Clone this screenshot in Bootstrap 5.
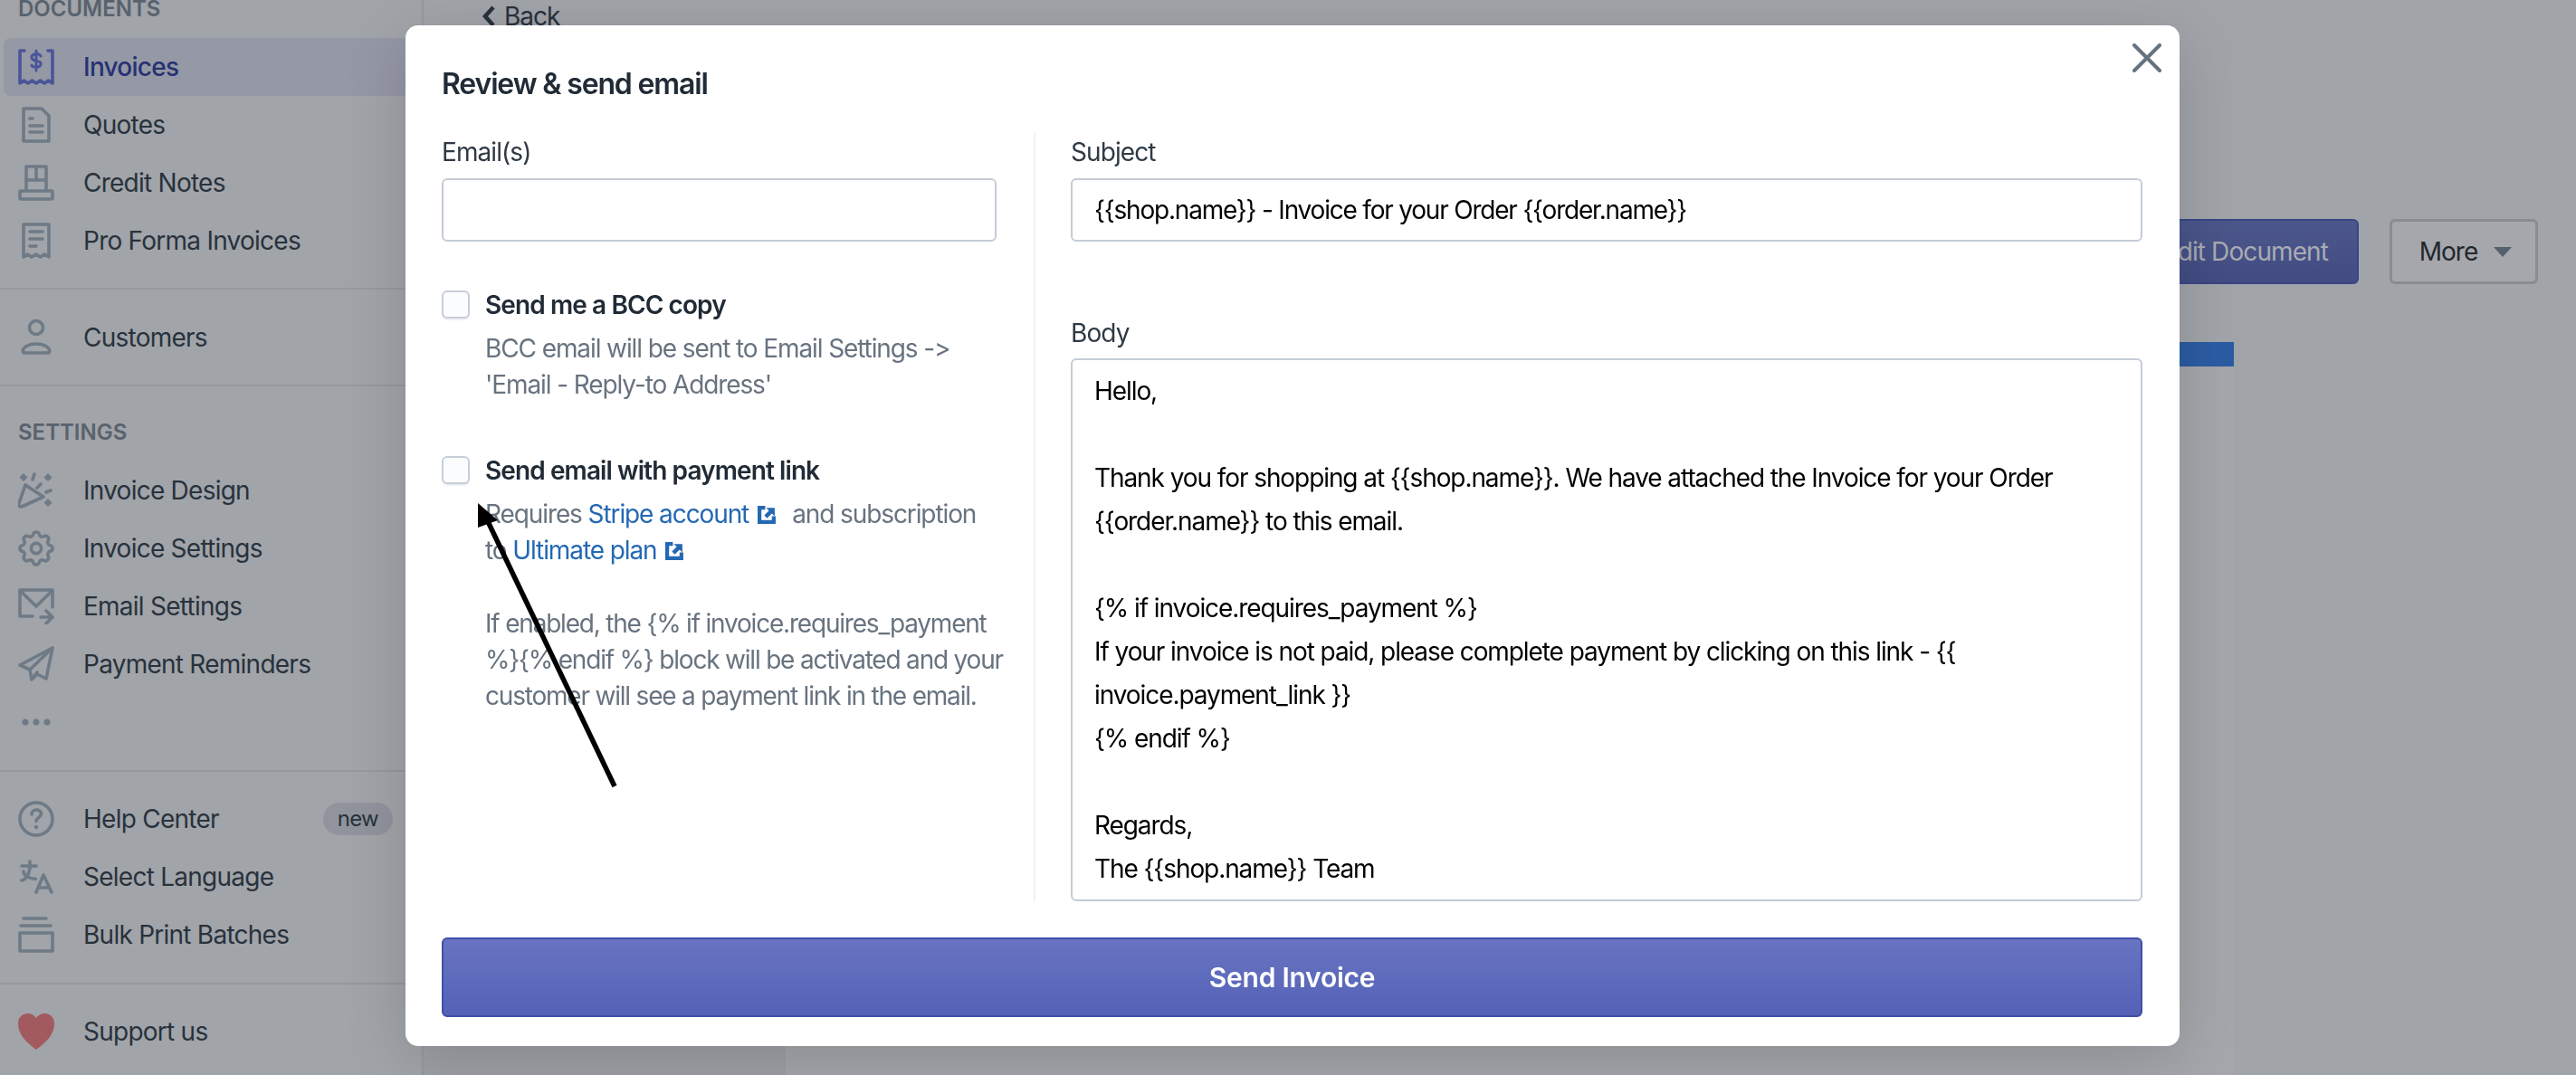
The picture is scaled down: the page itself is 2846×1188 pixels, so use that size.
<!DOCTYPE html>
<html lang="en">
<head>
  <meta charset="UTF-8">
  <meta name="viewport" content="width=device-width, initial-scale=1.0">
  <title>Review &amp; send email</title>
  <link href="https://cdn.jsdelivr.net/npm/bootstrap@5.3.3/dist/css/bootstrap.min.css" rel="stylesheet">
  <style>
    body {
        font-family: "Inter", "Liberation Sans", sans-serif;
        font-size: 28px;
        line-height: 40px;
        font-feature-settings: "calt" 0;
        color: #28323c;
        background-color: #a1a4a9;
        height: 1188px;
        overflow: hidden;
    }
    .app-shell { height: 1188px; }

    /* sidebar */
    .side-nav {
        width: 468px;
        flex: none;
        border-right: 2px solid #95989e;
        background-color: #a1a4a9;
        letter-spacing: -0.75px;
    }
    .side-label {
        height: 32px;
        line-height: 32px;
        padding-left: 20px;
        font-size: 24px;
        font-weight: 600;
        color: #58626e;
        letter-spacing: 0;
    }
    .side-label.is-first { margin-top: -6px; margin-bottom: 16px; }
    .side-label.is-settings { margin-top: 35px; margin-bottom: 16px; }
    .side-item {
        height: 64px;
        margin-left: 4px;
        padding-left: 16px;
        padding-right: 32px;
        gap: 32px;
        border-radius: 8px;
    }
    .side-item svg { width: 40px; height: 40px; flex: none; }
    .side-item.is-active { background-color: #9598a5; color: #263274; font-weight: 500; }
    .side-rule { height: 2px; background-color: #95989f; margin-top: 20px; }
    .side-rule.is-spaced { margin-top: 21px; margin-bottom: 20px; }
    .customer-row { margin-top: 21px; }
    .new-pill {
        font-size: 24px;
        font-weight: 400;
        line-height: 36px;
        padding: 0 16px;
        background-color: #91949d;
        color: #28323c;
    }
    .ico { fill: none; stroke: #6e7a86; stroke-width: 3.6; stroke-linecap: round; stroke-linejoin: round; }
    .ico-active { stroke: #4a5699; }
    .ico-dollar { stroke-width: 3; }
    .ico-fine { stroke-width: 1.8; }
    .ico-solid { fill: #6e7a86; }

    /* page behind the dialog */
    .back-link { padding: 0 0 0 64px; height: 36px; gap: 9px; line-height: 36px; letter-spacing: -1px; }
    .head-actions { margin-top: 206px; margin-right: 42px; gap: 34px; }
    .edit-btn {
        width: 400px;
        height: 72px;
        font-size: 28px;
        letter-spacing: -0.9px;
        padding: 0 32px;
        text-align: right;
        color: #a9acb3;
        background: linear-gradient(#4c578b, #424c83);
        border: 2px solid #394684;
        border-radius: 6px;
    }
    .more-btn {
        width: 164px;
        height: 72px;
        padding-left: 16px;
        font-size: 28px;
        letter-spacing: -1px;
        color: #22272e;
        background-color: #a5a7ac;
        border: 3px solid #888c93;
        border-radius: 6px;
        gap: 18px;
    }
    .more-caret { border-left: 10px solid transparent; border-right: 10px solid transparent; border-top: 11px solid #565f6c; }
    .doc-wrap { margin-top: 64px; }
    .thumb-col { width: 400px; background-color: #9da0a5; }
    .doc-page { width: 1600px; background-color: #a5a7ac; }
    .doc-bar { height: 27px; background-color: #2b5ca3; }

    /* dialog */
    .rvw-dialog { max-width: 1960px; width: 1960px; margin: 28px 0 0 448px; }
    .rvw-dialog .modal-content {
        height: 1128px;
        border: 0;
        border-radius: 14px;
        box-shadow: 0 16px 70px rgba(0, 0, 0, .16);
        padding: 0 41px 32px 40px;
        letter-spacing: -0.92px;
    }
    .rvw-title { font-size: 32px; font-weight: 600; line-height: 40px; margin: 45px 0 34px; color: #212b36; letter-spacing: -1.15px; }
    .close-x { position: absolute; top: 20px; right: 20px; width: 32px; height: 32px; padding: 0; border: 0; background: none; }
    .close-x svg { display: block; }
    .left-col { width: 656px; flex: none; padding-right: 41px; border-right: 2px solid #f1f2f4; }
    .right-col { padding-left: 39px; min-width: 0; }
    .fld-label { display: block; margin-top: 1px; margin-bottom: 9px; line-height: 40px; color: #2f3a45; }
    .fld-input {
        height: 70px;
        font-size: 28px;
        line-height: 48px;
        letter-spacing: -1.2px;
        font-feature-settings: "calt" 0;
        color: #000;
        padding: 10px 24px;
        border: 2px solid #c5ccd6;
        border-radius: 6px;
    }
    textarea.fld-input { height: 600px; resize: none; overflow: hidden; padding-top: 10px; letter-spacing: -1.08px; }
    .fld-label.body-label { margin-top: 81px; margin-bottom: 8px; }
    .opt-row { gap: 17px; }
    .opt-box.form-check-input {
        width: 31px;
        height: 31px;
        margin: 4px 0 0;
        flex: none;
        background-color: #fbfcfd;
        border: 2px solid #c8ced8;
        border-radius: 6px;
        box-shadow: 0 2px 0 #eef0f3;
    }
    .opt-title { font-weight: 600; color: #212b36; letter-spacing: -0.9px; }
    .opt-help { color: #68737f; margin: 8px -12px 0 0; letter-spacing: -1.1px; }
    .opt-help.is-gap { margin-top: 41px; letter-spacing: -1.2px; }
    .first-opt { margin-top: 50px; }
    .second-opt { margin-top: 55px; }
    .opt-help a { color: #2468b4; text-decoration: none; }
    .ext-ico { width: 21px; height: 21px; margin: 0 17px 0 10px; vertical-align: -1px; }
    .ext-ico path { stroke: #2468b4; stroke-width: 4; fill: none; }
    .ext-ico path + path { stroke: none; fill: #2468b4; }
    .send-btn {
        height: 88px;
        margin-top: 40px;
        font-size: 30px;
        font-weight: 600;
        letter-spacing: -0.25px;
        color: #fff;
        background: linear-gradient(#6874c1, #5561b6);
        border: 2px solid #404fa9;
        border-radius: 6px;
    }
    .pointer-arrow { position: absolute; left: 0; top: 0; width: 2846px; height: 1188px; z-index: 2000; pointer-events: none; }
  </style>
</head>
<body>
<div class="app-shell d-flex">
  <nav class="side-nav d-flex flex-column">
    <div class="side-label is-first">DOCUMENTS</div>
    <div class="side-item is-active d-flex align-items-center">
      <svg viewBox="0 0 40 40"><path class="ico ico-active" d="M7 2H2v36l4.500-3 4.500 3 4.500-3 4.500 3 4.500-3 4.500 3 4.500-3 4.500 3V2h-5"/><path class="ico ico-active ico-dollar" d="M25 8c-1-3-9-3-10 .5-.7 3 2 4 5 4.600s5.700 1.600 5 4.400c-1 3.500-9 3.500-10 .5M20 2v22"/></svg>
      <span>Invoices</span>
    </div>
    <div class="side-item d-flex align-items-center">
      <svg viewBox="0 0 40 40"><path class="ico" d="M6 2h20l8 8v28H6zM13 13h3M13 21h14M13 28h14"/></svg>
      <span>Quotes</span>
    </div>
    <div class="side-item d-flex align-items-center">
      <svg viewBox="0 0 40 40"><path class="ico" d="M9 28V2h22v26M20 2v15M9 17h22"/><rect class="ico" x="2" y="29" width="36" height="9" rx="1"/></svg>
      <span>Credit Notes</span>
    </div>
    <div class="side-item d-flex align-items-center">
      <svg viewBox="0 0 40 40"><path class="ico" d="M6 2h28v36l-4.700-3-4.600 3-5-3-4.800 3-4.500-3L6 38zM13 10h14M13 18h14M13 26h7"/></svg>
      <span>Pro Forma Invoices</span>
    </div>
    <div class="side-rule"></div>
    <div class="side-item customer-row d-flex align-items-center">
      <svg viewBox="0 0 40 40"><circle class="ico" cx="20" cy="9" r="7.500"/><path class="ico" d="M6 37c-3-6 6-10 14-10s17 4 14 10z"/></svg>
      <span>Customers</span>
    </div>
    <div class="side-rule"></div>
    <div class="side-label is-settings">SETTINGS</div>
    <div class="side-item d-flex align-items-center">
      <svg viewBox="0 0 40 40"><path class="ico" d="M8 14 1 34c-1 3 1 4.500 4 3.500L28 27zM18 2l-2 6M25 13l-4 4M31 22l5-2"/><path class="ico-solid" d="M6 1l4.500 4.500L6 10 1.500 5.500zM33 1l4.500 4.500L33 10l-4.500-4.500zM33 29l4.500 4.500L33 38l-4.500-4.500z"/></svg>
      <span>Invoice Design</span>
    </div>
    <div class="side-item d-flex align-items-center">
      <svg viewBox="2 2 20 20"><path class="ico ico-fine" d="M10.325 4.317c.426-1.756 2.924-1.756 3.350 0a1.724 1.724 0 0 0 2.573 1.066c1.543-.94 3.310.826 2.370 2.370a1.724 1.724 0 0 0 1.065 2.572c1.756.426 1.756 2.924 0 3.350a1.724 1.724 0 0 0-1.066 2.573c.94 1.543-.826 3.310-2.370 2.370a1.724 1.724 0 0 0-2.572 1.065c-.426 1.756-2.924 1.756-3.350 0a1.724 1.724 0 0 0-2.573-1.066c-1.543.94-3.310-.826-2.370-2.370a1.724 1.724 0 0 0-1.065-2.572c-1.756-.426-1.756-2.924 0-3.350a1.724 1.724 0 0 0 1.066-2.573c-.94-1.543.826-3.310 2.370-2.370.996.608 2.296.07 2.572-1.065z"/><circle class="ico ico-fine" cx="12" cy="12" r="2.800"/></svg>
      <span>Invoice Settings</span>
    </div>
    <div class="side-item d-flex align-items-center">
      <svg viewBox="0 0 40 40"><path class="ico" d="M38 21V2H2v29h14M2.500 3 20 20 37.500 3M25 32h13M31 25l7 7-7 7"/></svg>
      <span>Email Settings</span>
    </div>
    <div class="side-item d-flex align-items-center">
      <svg viewBox="0 0 40 40"><path class="ico" d="M38 2 2 21l11 5 2 11 6-6 10 5zM38 2 13 26M15 37l6-8"/></svg>
      <span>Payment Reminders</span>
    </div>
    <div class="side-item d-flex align-items-center">
      <svg viewBox="0 0 40 40"><circle class="ico-solid" cx="8" cy="20" r="3.500"/><circle class="ico-solid" cx="20" cy="20" r="3.500"/><circle class="ico-solid" cx="32" cy="20" r="3.500"/></svg>
    </div>
    <div class="side-rule is-spaced"></div>
    <div class="side-item d-flex align-items-center">
      <svg viewBox="0 0 40 40"><circle class="ico" cx="20" cy="20" r="18"/><path class="ico" d="M15 15c0-6.500 10.500-6.500 10.500-.5 0 4-5.500 4-5.500 8"/><circle class="ico-solid" cx="20" cy="29" r="2.200"/></svg>
      <span>Help Center</span>
      <span class="badge rounded-pill new-pill ms-auto">new</span>
    </div>
    <div class="side-item d-flex align-items-center">
      <svg viewBox="2 2 20 20"><path class="ico ico-fine" d="M4 6h8M8.500 3.500V6c0 4.400-2 7.500-4.500 8M5 9c0 2.200 3 4 6.700 4.200M12 20.500l4-9.500 4.500 9.500M19.400 18h-6.400"/></svg>
      <span>Select Language</span>
    </div>
    <div class="side-item d-flex align-items-center">
      <svg viewBox="0 0 40 40"><path class="ico" d="M6 2h25M3 10h33"/><rect class="ico" x="2" y="18" width="36" height="20"/></svg>
      <span>Bulk Print Batches</span>
    </div>
    <div class="side-rule is-spaced"></div>
    <div class="side-item d-flex align-items-center">
      <svg viewBox="0 0 40 40"><path fill="#a35a5e" d="M20 40C8 31 0 23 0 11 0 4 5 0 10.500 0 15 0 18 2 20 5c2-3 5-5 9.500-5C35 0 40 4 40 11c0 12-8 20-20 29z"/></svg>
      <span>Support us</span>
    </div>
  </nav>

  <main class="flex-grow-1 d-flex flex-column">
    <div class="back-link d-flex align-items-center">
      <svg width="16" height="26" viewBox="0 0 16 26"><path d="M13 3 4 13l9 10" fill="none" stroke="#28323c" stroke-width="4.500"/></svg>
      <span>Back</span>
    </div>
    <div class="head-actions d-flex justify-content-end">
      <button type="button" class="btn edit-btn">Edit Document</button>
      <button type="button" class="btn more-btn d-flex align-items-center justify-content-center">More <span class="more-caret"></span></button>
    </div>
    <div class="doc-wrap d-flex flex-grow-1">
      <div class="thumb-col"></div>
      <div class="doc-page"><div class="doc-bar"></div></div>
    </div>
  </main>
</div>

<div class="modal d-block">
  <div class="modal-dialog rvw-dialog">
    <div class="modal-content">
      <button type="button" class="close-x" aria-label="Close">
        <svg width="32" height="32" viewBox="0 0 32 32"><path d="M2 2l28 28M30 2 2 30" stroke="#66737f" stroke-width="4" stroke-linecap="round"/></svg>
      </button>
      <h5 class="rvw-title">Review &amp; send email</h5>
      <div class="d-flex">
        <div class="left-col">
          <label class="fld-label" for="emails">Email(s)</label>
          <input id="emails" type="text" class="form-control fld-input">

          <div class="opt-row first-opt d-flex">
            <input type="checkbox" class="form-check-input opt-box">
            <div>
              <div class="opt-title">Send me a BCC copy</div>
              <p class="opt-help">BCC email will be sent to Email Settings -&gt; 'Email - Reply-to Address'</p>
            </div>
          </div>

          <div class="opt-row second-opt d-flex">
            <input type="checkbox" class="form-check-input opt-box">
            <div>
              <div class="opt-title">Send email with payment link</div>
              <p class="opt-help">Requires <a href="#">Stripe account<svg class="ext-ico" viewBox="0 0 20 20"><path d="M8 3H2v15h15v-6"/><path d="M9 3h9v9l-3-3-5 5-3-3 5-5z"/></svg></a>and subscription<br>to <a href="#">Ultimate plan<svg class="ext-ico" viewBox="0 0 20 20"><path d="M8 3H2v15h15v-6"/><path d="M9 3h9v9l-3-3-5 5-3-3 5-5z"/></svg></a></p>
              <p class="opt-help is-gap">If enabled, the {% if invoice.requires_payment<br>%}{% endif %} block will be activated and your<br>customer will see a payment link in the email.</p>
            </div>
          </div>
        </div>
        <div class="right-col flex-grow-1">
          <label class="fld-label" for="subject">Subject</label>
          <input id="subject" type="text" class="form-control fld-input" value="{{shop.name}} - Invoice for your Order {{order.name}}">
          <label class="fld-label body-label" for="mailBody">Body</label>
          <textarea id="mailBody" class="form-control fld-input">Hello,

Thank you for shopping at {{shop.name}}. We have attached the Invoice for your Order {{order.name}} to this email.

{% if invoice.requires_payment %}
If your invoice is not paid, please complete payment by clicking on this link - {{ invoice.payment_link }}
{% endif %}

Regards,
The {{shop.name}} Team</textarea>
        </div>
      </div>
      <button type="button" class="btn send-btn w-100">Send Invoice</button>
    </div>
  </div>
</div>

<svg class="pointer-arrow" viewBox="0 0 2846 1188">
  <path d="M679 869 536 570" stroke="#000" stroke-width="5.500" fill="none"/>
  <path d="M528 556 528 583 550 575z" fill="#000"/>
</svg>

<script src="https://cdn.jsdelivr.net/npm/bootstrap@5.3.3/dist/js/bootstrap.bundle.min.js"></script>
</body>
</html>
